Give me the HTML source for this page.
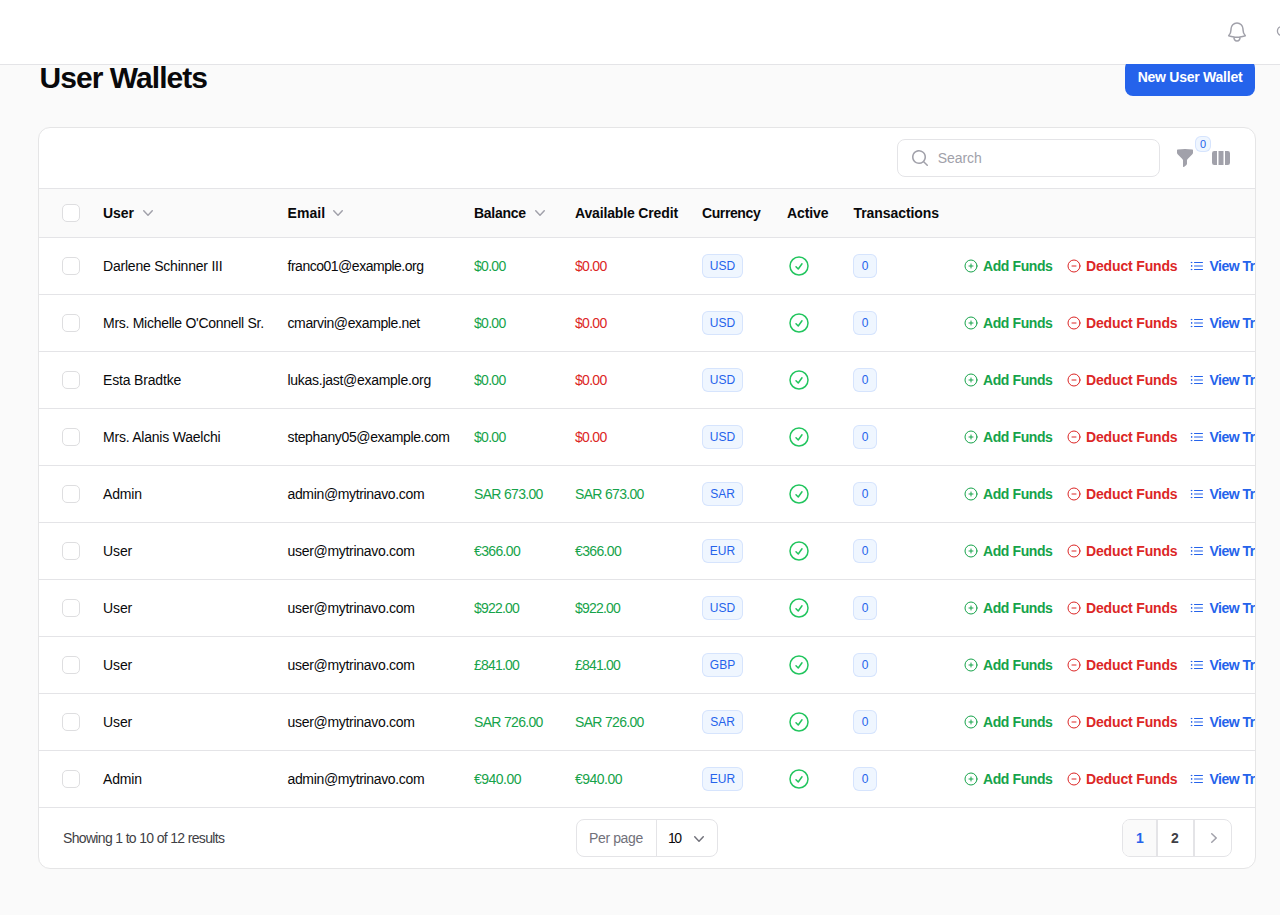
<!DOCTYPE html><html><head><meta charset="utf-8"><title>User Wallets</title><style>
*{box-sizing:border-box;margin:0;padding:0}
html,body{width:1280px;height:915px;overflow:hidden}
body{background:#fafafa;font-family:"Liberation Sans",sans-serif;color:#09090b;position:relative;font-size:14px;line-height:20px}
.ab{position:absolute;display:block}
.t{position:absolute;white-space:nowrap;line-height:20px;font-size:14px}
.top{position:absolute;left:0;top:0;width:1280px;height:64px;background:#fff;z-index:5}
.topline{position:absolute;left:0;top:64px;width:1280px;height:1px;background:#e4e4e7;z-index:0}
.title{position:absolute;left:39.5px;top:59.5px;font-size:30px;line-height:36px;font-weight:700;letter-spacing:-0.95px;white-space:nowrap;color:#09090b}
.btn{position:absolute;left:1125px;top:60px;width:130px;height:36px;border-radius:8px;background:#2563eb;color:#fff;font-weight:700;font-size:14px;line-height:35px;text-align:center;letter-spacing:-0.25px;z-index:1}
.card{position:absolute;left:38px;top:127px;width:1218px;height:742px;background:#fff;border:1px solid #e5e5e6;border-radius:12px;overflow:hidden}
.hl{position:absolute;left:0;width:1216px;height:1px;background:#e4e4e7}
.hdr{position:absolute;left:0;top:61px;width:1216px;height:48px;background:#fafafa}
.cb{position:absolute;width:18px;height:18px;border:1px solid #dedee0;border-radius:5px;background:#fff}
.th{font-weight:700;color:#09090b}
.badge{position:absolute;height:24px;border-radius:6px;background:#eff6ff;box-shadow:inset 0 0 0 1px rgba(37,99,235,.12);color:#2563eb;font-size:12px;line-height:24px;text-align:center}
.act{font-weight:700}
.g{color:#16a34a}.r{color:#dc2626}.b{color:#2563eb}
</style></head><body>
<div class="top">
<svg class="ab" style="left:1225px;top:20px" width="24" height="24" viewBox="0 0 24 24" fill="none" stroke="#a1a1aa" stroke-width="1.5" stroke-linecap="round" stroke-linejoin="round"><path d="M14.857 17.082a23.848 23.848 0 005.454-1.31A8.967 8.967 0 0118 9.75v-.7V9A6 6 0 006 9v.75a8.967 8.967 0 01-2.312 6.022c1.733.64 3.56 1.085 5.455 1.31m5.714 0a24.255 24.255 0 01-5.714 0m5.714 0a3 3 0 11-5.714 0"/></svg>
<svg class="ab" style="left:1270px;top:20px" width="24" height="24" viewBox="0 0 24 24" fill="none" stroke="#a1a1aa" stroke-width="1.3"><circle cx="12" cy="11" r="4.6"/></svg>
</div>
<div class="topline"></div>
<div class="title">User Wallets</div>
<div class="btn">New User Wallet</div>
<div class="card">
<div class="ab" style="left:858px;top:11px;width:263px;height:38px;border:1px solid #e4e4e7;border-radius:8px;background:#fff"></div>
<svg class="ab" style="left:871px;top:20px" width="20" height="20" viewBox="0 0 20 20" fill="#a1a1aa"><path fill-rule="evenodd" d="M9 3.5a5.5 5.5 0 100 11 5.5 5.5 0 000-11zM2 9a7 7 0 1112.452 4.391l3.328 3.329a.75.75 0 11-1.06 1.06l-3.329-3.328A7 7 0 012 9z"/></svg>
<div class="t" style="left:898.7px;top:20px;color:#a1a1aa;letter-spacing:-0.04px">Search</div>
<svg class="ab" style="left:1136px;top:20px" width="20" height="20" viewBox="0 0 20 20" fill="#a1a1aa"><path fill-rule="evenodd" d="M2.628 1.601C5.028 1.206 7.49 1 10 1s4.973.206 7.372.601a.75.75 0 01.628.74v2.288a2.25 2.25 0 01-.659 1.59l-4.682 4.683a2.25 2.25 0 00-.659 1.59v3.037c0 .684-.31 1.33-.844 1.757l-1.937 1.55A.75.75 0 018 18.25v-5.757a2.25 2.25 0 00-.659-1.591L2.659 6.22A2.25 2.25 0 012 4.629V2.34a.75.75 0 01.628-.74z"/></svg>
<div class="badge" style="left:1156px;top:8px;width:16px;height:16px;line-height:16px;font-size:11px;border-radius:6px">0</div>
<svg class="ab" style="left:1172px;top:20px" width="20" height="20" viewBox="0 0 20 20" fill="#a1a1aa"><path d="M14 17h2.75A2.25 2.25 0 0019 14.75v-9.5A2.25 2.25 0 0016.75 3H14v14zM12.5 3h-5v14h5V3zM3.25 3H6v14H3.25A2.25 2.25 0 011 14.75v-9.5A2.25 2.25 0 013.25 3z"/></svg>
<div class="hl" style="top:60px"></div>
<div class="hdr" style="top:61px"></div>
<div class="hl" style="top:109px"></div>
<div class="cb" style="left:23px;top:76px"></div>
<div class="t th" style="left:64px;top:75px;letter-spacing:-0.1px;">User</div>
<svg class="ab" style="left:99px;top:75px" width="20" height="20" viewBox="0 0 20 20" fill="#a1a1aa"><path fill-rule="evenodd" d="M5.23 7.21a.75.75 0 011.06.02L10 11.168l3.71-3.938a.75.75 0 111.08 1.04l-4.25 4.5a.75.75 0 01-1.08 0l-4.25-4.5a.75.75 0 01.02-1.06z"/></svg>
<div class="t th" style="left:248.5px;top:75px;letter-spacing:0.05px;">Email</div>
<svg class="ab" style="left:289px;top:75px" width="20" height="20" viewBox="0 0 20 20" fill="#a1a1aa"><path fill-rule="evenodd" d="M5.23 7.21a.75.75 0 011.06.02L10 11.168l3.71-3.938a.75.75 0 111.08 1.04l-4.25 4.5a.75.75 0 01-1.08 0l-4.25-4.5a.75.75 0 01.02-1.06z"/></svg>
<div class="t th" style="left:435px;top:75px;letter-spacing:-0.267px;">Balance</div>
<svg class="ab" style="left:491px;top:75px" width="20" height="20" viewBox="0 0 20 20" fill="#a1a1aa"><path fill-rule="evenodd" d="M5.23 7.21a.75.75 0 011.06.02L10 11.168l3.71-3.938a.75.75 0 111.08 1.04l-4.25 4.5a.75.75 0 01-1.08 0l-4.25-4.5a.75.75 0 01.02-1.06z"/></svg>
<div class="t th" style="left:536px;top:75px;letter-spacing:-0.15px;">Available Credit</div>
<div class="t th" style="left:663px;top:75px;letter-spacing:-0.4px;">Currency</div>
<div class="t th" style="left:748px;top:75px;letter-spacing:-0.12px;">Active</div>
<div class="t th" style="left:814.5px;top:75px;letter-spacing:-0.073px;">Transactions</div>
<div class="cb" style="left:23px;top:129px"></div>
<div class="t" style="left:64px;top:128px;letter-spacing:-0.216px;">Darlene Schinner III</div>
<div class="t" style="left:248.5px;top:128px;letter-spacing:-0.484px;">franco01@example.org</div>
<div class="t g" style="left:435px;top:128px;letter-spacing:-0.7px;">$0.00</div>
<div class="t r" style="left:536px;top:128px;letter-spacing:-0.7px;">$0.00</div>
<div class="badge" style="left:663px;top:126px;width:41px">USD</div>
<svg class="ab" style="left:748px;top:126px" width="24" height="24" viewBox="0 0 24 24" fill="none" stroke="#22c55e" stroke-width="1.5" stroke-linecap="round" stroke-linejoin="round"><path d="M9 12.75L11.25 15 15 9.75M21 12a9 9 0 11-18 0 9 9 0 0118 0z"/></svg>
<div class="badge" style="left:814px;top:126px;width:24px">0</div>
<svg class="ab" style="left:924px;top:130px" width="16" height="16" viewBox="0 0 24 24" fill="none" stroke="#16a34a" stroke-width="1.5" stroke-linecap="round" stroke-linejoin="round"><path d="M12 9v6m3-3H9m12 0a9 9 0 11-18 0 9 9 0 0118 0z"/></svg>
<div class="t act g" style="left:944px;top:128px;letter-spacing:-0.4px;">Add Funds</div>
<svg class="ab" style="left:1027px;top:130px" width="16" height="16" viewBox="0 0 24 24" fill="none" stroke="#dc2626" stroke-width="1.5" stroke-linecap="round" stroke-linejoin="round"><path d="M15 12H9m12 0a9 9 0 11-18 0 9 9 0 0118 0z"/></svg>
<div class="t act r" style="left:1047px;top:128px;letter-spacing:-0.155px;">Deduct Funds</div>
<svg class="ab" style="left:1150px;top:130px" width="16" height="16" viewBox="0 0 24 24" fill="none" stroke="#2563eb" stroke-width="1.5" stroke-linecap="round" stroke-linejoin="round"><path d="M8.25 6.75h12M8.25 12h12m-12 5.25h12M3.75 6.75h.007v.008H3.75V6.75zm.375 0a.375.375 0 11-.75 0 .375.375 0 01.75 0zM3.75 12h.007v.008H3.75V12zm.375 0a.375.375 0 11-.75 0 .375.375 0 01.75 0zm-.375 5.25h.007v.008h-.007v-.008zm.375 0a.375.375 0 11-.75 0 .375.375 0 01.75 0z"/></svg>
<div class="t act b" style="left:1170.5px;top:128px;letter-spacing:-0.5px">View Transactions</div>
<div class="hl" style="top:166px"></div>
<div class="cb" style="left:23px;top:186px"></div>
<div class="t" style="left:64px;top:185px;letter-spacing:-0.281px;">Mrs. Michelle O&#39;Connell Sr.</div>
<div class="t" style="left:248.5px;top:185px;letter-spacing:-0.378px;">cmarvin@example.net</div>
<div class="t g" style="left:435px;top:185px;letter-spacing:-0.7px;">$0.00</div>
<div class="t r" style="left:536px;top:185px;letter-spacing:-0.7px;">$0.00</div>
<div class="badge" style="left:663px;top:183px;width:41px">USD</div>
<svg class="ab" style="left:748px;top:183px" width="24" height="24" viewBox="0 0 24 24" fill="none" stroke="#22c55e" stroke-width="1.5" stroke-linecap="round" stroke-linejoin="round"><path d="M9 12.75L11.25 15 15 9.75M21 12a9 9 0 11-18 0 9 9 0 0118 0z"/></svg>
<div class="badge" style="left:814px;top:183px;width:24px">0</div>
<svg class="ab" style="left:924px;top:187px" width="16" height="16" viewBox="0 0 24 24" fill="none" stroke="#16a34a" stroke-width="1.5" stroke-linecap="round" stroke-linejoin="round"><path d="M12 9v6m3-3H9m12 0a9 9 0 11-18 0 9 9 0 0118 0z"/></svg>
<div class="t act g" style="left:944px;top:185px;letter-spacing:-0.4px;">Add Funds</div>
<svg class="ab" style="left:1027px;top:187px" width="16" height="16" viewBox="0 0 24 24" fill="none" stroke="#dc2626" stroke-width="1.5" stroke-linecap="round" stroke-linejoin="round"><path d="M15 12H9m12 0a9 9 0 11-18 0 9 9 0 0118 0z"/></svg>
<div class="t act r" style="left:1047px;top:185px;letter-spacing:-0.155px;">Deduct Funds</div>
<svg class="ab" style="left:1150px;top:187px" width="16" height="16" viewBox="0 0 24 24" fill="none" stroke="#2563eb" stroke-width="1.5" stroke-linecap="round" stroke-linejoin="round"><path d="M8.25 6.75h12M8.25 12h12m-12 5.25h12M3.75 6.75h.007v.008H3.75V6.75zm.375 0a.375.375 0 11-.75 0 .375.375 0 01.75 0zM3.75 12h.007v.008H3.75V12zm.375 0a.375.375 0 11-.75 0 .375.375 0 01.75 0zm-.375 5.25h.007v.008h-.007v-.008zm.375 0a.375.375 0 11-.75 0 .375.375 0 01.75 0z"/></svg>
<div class="t act b" style="left:1170.5px;top:185px;letter-spacing:-0.5px">View Transactions</div>
<div class="hl" style="top:223px"></div>
<div class="cb" style="left:23px;top:243px"></div>
<div class="t" style="left:64px;top:242px;letter-spacing:-0.173px;">Esta Bradtke</div>
<div class="t" style="left:248.5px;top:242px;letter-spacing:-0.281px;">lukas.jast@example.org</div>
<div class="t g" style="left:435px;top:242px;letter-spacing:-0.7px;">$0.00</div>
<div class="t r" style="left:536px;top:242px;letter-spacing:-0.7px;">$0.00</div>
<div class="badge" style="left:663px;top:240px;width:41px">USD</div>
<svg class="ab" style="left:748px;top:240px" width="24" height="24" viewBox="0 0 24 24" fill="none" stroke="#22c55e" stroke-width="1.5" stroke-linecap="round" stroke-linejoin="round"><path d="M9 12.75L11.25 15 15 9.75M21 12a9 9 0 11-18 0 9 9 0 0118 0z"/></svg>
<div class="badge" style="left:814px;top:240px;width:24px">0</div>
<svg class="ab" style="left:924px;top:244px" width="16" height="16" viewBox="0 0 24 24" fill="none" stroke="#16a34a" stroke-width="1.5" stroke-linecap="round" stroke-linejoin="round"><path d="M12 9v6m3-3H9m12 0a9 9 0 11-18 0 9 9 0 0118 0z"/></svg>
<div class="t act g" style="left:944px;top:242px;letter-spacing:-0.4px;">Add Funds</div>
<svg class="ab" style="left:1027px;top:244px" width="16" height="16" viewBox="0 0 24 24" fill="none" stroke="#dc2626" stroke-width="1.5" stroke-linecap="round" stroke-linejoin="round"><path d="M15 12H9m12 0a9 9 0 11-18 0 9 9 0 0118 0z"/></svg>
<div class="t act r" style="left:1047px;top:242px;letter-spacing:-0.155px;">Deduct Funds</div>
<svg class="ab" style="left:1150px;top:244px" width="16" height="16" viewBox="0 0 24 24" fill="none" stroke="#2563eb" stroke-width="1.5" stroke-linecap="round" stroke-linejoin="round"><path d="M8.25 6.75h12M8.25 12h12m-12 5.25h12M3.75 6.75h.007v.008H3.75V6.75zm.375 0a.375.375 0 11-.75 0 .375.375 0 01.75 0zM3.75 12h.007v.008H3.75V12zm.375 0a.375.375 0 11-.75 0 .375.375 0 01.75 0zm-.375 5.25h.007v.008h-.007v-.008zm.375 0a.375.375 0 11-.75 0 .375.375 0 01.75 0z"/></svg>
<div class="t act b" style="left:1170.5px;top:242px;letter-spacing:-0.5px">View Transactions</div>
<div class="hl" style="top:280px"></div>
<div class="cb" style="left:23px;top:300px"></div>
<div class="t" style="left:64px;top:299px;letter-spacing:-0.222px;">Mrs. Alanis Waelchi</div>
<div class="t" style="left:248.5px;top:299px;letter-spacing:-0.357px;">stephany05@example.com</div>
<div class="t g" style="left:435px;top:299px;letter-spacing:-0.7px;">$0.00</div>
<div class="t r" style="left:536px;top:299px;letter-spacing:-0.7px;">$0.00</div>
<div class="badge" style="left:663px;top:297px;width:41px">USD</div>
<svg class="ab" style="left:748px;top:297px" width="24" height="24" viewBox="0 0 24 24" fill="none" stroke="#22c55e" stroke-width="1.5" stroke-linecap="round" stroke-linejoin="round"><path d="M9 12.75L11.25 15 15 9.75M21 12a9 9 0 11-18 0 9 9 0 0118 0z"/></svg>
<div class="badge" style="left:814px;top:297px;width:24px">0</div>
<svg class="ab" style="left:924px;top:301px" width="16" height="16" viewBox="0 0 24 24" fill="none" stroke="#16a34a" stroke-width="1.5" stroke-linecap="round" stroke-linejoin="round"><path d="M12 9v6m3-3H9m12 0a9 9 0 11-18 0 9 9 0 0118 0z"/></svg>
<div class="t act g" style="left:944px;top:299px;letter-spacing:-0.4px;">Add Funds</div>
<svg class="ab" style="left:1027px;top:301px" width="16" height="16" viewBox="0 0 24 24" fill="none" stroke="#dc2626" stroke-width="1.5" stroke-linecap="round" stroke-linejoin="round"><path d="M15 12H9m12 0a9 9 0 11-18 0 9 9 0 0118 0z"/></svg>
<div class="t act r" style="left:1047px;top:299px;letter-spacing:-0.155px;">Deduct Funds</div>
<svg class="ab" style="left:1150px;top:301px" width="16" height="16" viewBox="0 0 24 24" fill="none" stroke="#2563eb" stroke-width="1.5" stroke-linecap="round" stroke-linejoin="round"><path d="M8.25 6.75h12M8.25 12h12m-12 5.25h12M3.75 6.75h.007v.008H3.75V6.75zm.375 0a.375.375 0 11-.75 0 .375.375 0 01.75 0zM3.75 12h.007v.008H3.75V12zm.375 0a.375.375 0 11-.75 0 .375.375 0 01.75 0zm-.375 5.25h.007v.008h-.007v-.008zm.375 0a.375.375 0 11-.75 0 .375.375 0 01.75 0z"/></svg>
<div class="t act b" style="left:1170.5px;top:299px;letter-spacing:-0.5px">View Transactions</div>
<div class="hl" style="top:337px"></div>
<div class="cb" style="left:23px;top:357px"></div>
<div class="t" style="left:64px;top:356px;letter-spacing:-0.175px;">Admin</div>
<div class="t" style="left:248.5px;top:356px;letter-spacing:-0.35px;">admin@mytrinavo.com</div>
<div class="t g" style="left:435px;top:356px;letter-spacing:-0.678px;">SAR 673.00</div>
<div class="t g" style="left:536px;top:356px;letter-spacing:-0.678px;">SAR 673.00</div>
<div class="badge" style="left:663px;top:354px;width:41px">SAR</div>
<svg class="ab" style="left:748px;top:354px" width="24" height="24" viewBox="0 0 24 24" fill="none" stroke="#22c55e" stroke-width="1.5" stroke-linecap="round" stroke-linejoin="round"><path d="M9 12.75L11.25 15 15 9.75M21 12a9 9 0 11-18 0 9 9 0 0118 0z"/></svg>
<div class="badge" style="left:814px;top:354px;width:24px">0</div>
<svg class="ab" style="left:924px;top:358px" width="16" height="16" viewBox="0 0 24 24" fill="none" stroke="#16a34a" stroke-width="1.5" stroke-linecap="round" stroke-linejoin="round"><path d="M12 9v6m3-3H9m12 0a9 9 0 11-18 0 9 9 0 0118 0z"/></svg>
<div class="t act g" style="left:944px;top:356px;letter-spacing:-0.4px;">Add Funds</div>
<svg class="ab" style="left:1027px;top:358px" width="16" height="16" viewBox="0 0 24 24" fill="none" stroke="#dc2626" stroke-width="1.5" stroke-linecap="round" stroke-linejoin="round"><path d="M15 12H9m12 0a9 9 0 11-18 0 9 9 0 0118 0z"/></svg>
<div class="t act r" style="left:1047px;top:356px;letter-spacing:-0.155px;">Deduct Funds</div>
<svg class="ab" style="left:1150px;top:358px" width="16" height="16" viewBox="0 0 24 24" fill="none" stroke="#2563eb" stroke-width="1.5" stroke-linecap="round" stroke-linejoin="round"><path d="M8.25 6.75h12M8.25 12h12m-12 5.25h12M3.75 6.75h.007v.008H3.75V6.75zm.375 0a.375.375 0 11-.75 0 .375.375 0 01.75 0zM3.75 12h.007v.008H3.75V12zm.375 0a.375.375 0 11-.75 0 .375.375 0 01.75 0zm-.375 5.25h.007v.008h-.007v-.008zm.375 0a.375.375 0 11-.75 0 .375.375 0 01.75 0z"/></svg>
<div class="t act b" style="left:1170.5px;top:356px;letter-spacing:-0.5px">View Transactions</div>
<div class="hl" style="top:394px"></div>
<div class="cb" style="left:23px;top:414px"></div>
<div class="t" style="left:64px;top:413px;letter-spacing:-0.1px;">User</div>
<div class="t" style="left:248.5px;top:413px;letter-spacing:-0.3px;">user@mytrinavo.com</div>
<div class="t g" style="left:435px;top:413px;letter-spacing:-0.65px;">€366.00</div>
<div class="t g" style="left:536px;top:413px;letter-spacing:-0.65px;">€366.00</div>
<div class="badge" style="left:663px;top:411px;width:41px">EUR</div>
<svg class="ab" style="left:748px;top:411px" width="24" height="24" viewBox="0 0 24 24" fill="none" stroke="#22c55e" stroke-width="1.5" stroke-linecap="round" stroke-linejoin="round"><path d="M9 12.75L11.25 15 15 9.75M21 12a9 9 0 11-18 0 9 9 0 0118 0z"/></svg>
<div class="badge" style="left:814px;top:411px;width:24px">0</div>
<svg class="ab" style="left:924px;top:415px" width="16" height="16" viewBox="0 0 24 24" fill="none" stroke="#16a34a" stroke-width="1.5" stroke-linecap="round" stroke-linejoin="round"><path d="M12 9v6m3-3H9m12 0a9 9 0 11-18 0 9 9 0 0118 0z"/></svg>
<div class="t act g" style="left:944px;top:413px;letter-spacing:-0.4px;">Add Funds</div>
<svg class="ab" style="left:1027px;top:415px" width="16" height="16" viewBox="0 0 24 24" fill="none" stroke="#dc2626" stroke-width="1.5" stroke-linecap="round" stroke-linejoin="round"><path d="M15 12H9m12 0a9 9 0 11-18 0 9 9 0 0118 0z"/></svg>
<div class="t act r" style="left:1047px;top:413px;letter-spacing:-0.155px;">Deduct Funds</div>
<svg class="ab" style="left:1150px;top:415px" width="16" height="16" viewBox="0 0 24 24" fill="none" stroke="#2563eb" stroke-width="1.5" stroke-linecap="round" stroke-linejoin="round"><path d="M8.25 6.75h12M8.25 12h12m-12 5.25h12M3.75 6.75h.007v.008H3.75V6.75zm.375 0a.375.375 0 11-.75 0 .375.375 0 01.75 0zM3.75 12h.007v.008H3.75V12zm.375 0a.375.375 0 11-.75 0 .375.375 0 01.75 0zm-.375 5.25h.007v.008h-.007v-.008zm.375 0a.375.375 0 11-.75 0 .375.375 0 01.75 0z"/></svg>
<div class="t act b" style="left:1170.5px;top:413px;letter-spacing:-0.5px">View Transactions</div>
<div class="hl" style="top:451px"></div>
<div class="cb" style="left:23px;top:471px"></div>
<div class="t" style="left:64px;top:470px;letter-spacing:-0.1px;">User</div>
<div class="t" style="left:248.5px;top:470px;letter-spacing:-0.3px;">user@mytrinavo.com</div>
<div class="t g" style="left:435px;top:470px;letter-spacing:-0.783px;">$922.00</div>
<div class="t g" style="left:536px;top:470px;letter-spacing:-0.783px;">$922.00</div>
<div class="badge" style="left:663px;top:468px;width:41px">USD</div>
<svg class="ab" style="left:748px;top:468px" width="24" height="24" viewBox="0 0 24 24" fill="none" stroke="#22c55e" stroke-width="1.5" stroke-linecap="round" stroke-linejoin="round"><path d="M9 12.75L11.25 15 15 9.75M21 12a9 9 0 11-18 0 9 9 0 0118 0z"/></svg>
<div class="badge" style="left:814px;top:468px;width:24px">0</div>
<svg class="ab" style="left:924px;top:472px" width="16" height="16" viewBox="0 0 24 24" fill="none" stroke="#16a34a" stroke-width="1.5" stroke-linecap="round" stroke-linejoin="round"><path d="M12 9v6m3-3H9m12 0a9 9 0 11-18 0 9 9 0 0118 0z"/></svg>
<div class="t act g" style="left:944px;top:470px;letter-spacing:-0.4px;">Add Funds</div>
<svg class="ab" style="left:1027px;top:472px" width="16" height="16" viewBox="0 0 24 24" fill="none" stroke="#dc2626" stroke-width="1.5" stroke-linecap="round" stroke-linejoin="round"><path d="M15 12H9m12 0a9 9 0 11-18 0 9 9 0 0118 0z"/></svg>
<div class="t act r" style="left:1047px;top:470px;letter-spacing:-0.155px;">Deduct Funds</div>
<svg class="ab" style="left:1150px;top:472px" width="16" height="16" viewBox="0 0 24 24" fill="none" stroke="#2563eb" stroke-width="1.5" stroke-linecap="round" stroke-linejoin="round"><path d="M8.25 6.75h12M8.25 12h12m-12 5.25h12M3.75 6.75h.007v.008H3.75V6.75zm.375 0a.375.375 0 11-.75 0 .375.375 0 01.75 0zM3.75 12h.007v.008H3.75V12zm.375 0a.375.375 0 11-.75 0 .375.375 0 01.75 0zm-.375 5.25h.007v.008h-.007v-.008zm.375 0a.375.375 0 11-.75 0 .375.375 0 01.75 0z"/></svg>
<div class="t act b" style="left:1170.5px;top:470px;letter-spacing:-0.5px">View Transactions</div>
<div class="hl" style="top:508px"></div>
<div class="cb" style="left:23px;top:528px"></div>
<div class="t" style="left:64px;top:527px;letter-spacing:-0.1px;">User</div>
<div class="t" style="left:248.5px;top:527px;letter-spacing:-0.3px;">user@mytrinavo.com</div>
<div class="t g" style="left:435px;top:527px;letter-spacing:-0.783px;">£841.00</div>
<div class="t g" style="left:536px;top:527px;letter-spacing:-0.783px;">£841.00</div>
<div class="badge" style="left:663px;top:525px;width:41px">GBP</div>
<svg class="ab" style="left:748px;top:525px" width="24" height="24" viewBox="0 0 24 24" fill="none" stroke="#22c55e" stroke-width="1.5" stroke-linecap="round" stroke-linejoin="round"><path d="M9 12.75L11.25 15 15 9.75M21 12a9 9 0 11-18 0 9 9 0 0118 0z"/></svg>
<div class="badge" style="left:814px;top:525px;width:24px">0</div>
<svg class="ab" style="left:924px;top:529px" width="16" height="16" viewBox="0 0 24 24" fill="none" stroke="#16a34a" stroke-width="1.5" stroke-linecap="round" stroke-linejoin="round"><path d="M12 9v6m3-3H9m12 0a9 9 0 11-18 0 9 9 0 0118 0z"/></svg>
<div class="t act g" style="left:944px;top:527px;letter-spacing:-0.4px;">Add Funds</div>
<svg class="ab" style="left:1027px;top:529px" width="16" height="16" viewBox="0 0 24 24" fill="none" stroke="#dc2626" stroke-width="1.5" stroke-linecap="round" stroke-linejoin="round"><path d="M15 12H9m12 0a9 9 0 11-18 0 9 9 0 0118 0z"/></svg>
<div class="t act r" style="left:1047px;top:527px;letter-spacing:-0.155px;">Deduct Funds</div>
<svg class="ab" style="left:1150px;top:529px" width="16" height="16" viewBox="0 0 24 24" fill="none" stroke="#2563eb" stroke-width="1.5" stroke-linecap="round" stroke-linejoin="round"><path d="M8.25 6.75h12M8.25 12h12m-12 5.25h12M3.75 6.75h.007v.008H3.75V6.75zm.375 0a.375.375 0 11-.75 0 .375.375 0 01.75 0zM3.75 12h.007v.008H3.75V12zm.375 0a.375.375 0 11-.75 0 .375.375 0 01.75 0zm-.375 5.25h.007v.008h-.007v-.008zm.375 0a.375.375 0 11-.75 0 .375.375 0 01.75 0z"/></svg>
<div class="t act b" style="left:1170.5px;top:527px;letter-spacing:-0.5px">View Transactions</div>
<div class="hl" style="top:565px"></div>
<div class="cb" style="left:23px;top:585px"></div>
<div class="t" style="left:64px;top:584px;letter-spacing:-0.1px;">User</div>
<div class="t" style="left:248.5px;top:584px;letter-spacing:-0.3px;">user@mytrinavo.com</div>
<div class="t g" style="left:435px;top:584px;letter-spacing:-0.678px;">SAR 726.00</div>
<div class="t g" style="left:536px;top:584px;letter-spacing:-0.678px;">SAR 726.00</div>
<div class="badge" style="left:663px;top:582px;width:41px">SAR</div>
<svg class="ab" style="left:748px;top:582px" width="24" height="24" viewBox="0 0 24 24" fill="none" stroke="#22c55e" stroke-width="1.5" stroke-linecap="round" stroke-linejoin="round"><path d="M9 12.75L11.25 15 15 9.75M21 12a9 9 0 11-18 0 9 9 0 0118 0z"/></svg>
<div class="badge" style="left:814px;top:582px;width:24px">0</div>
<svg class="ab" style="left:924px;top:586px" width="16" height="16" viewBox="0 0 24 24" fill="none" stroke="#16a34a" stroke-width="1.5" stroke-linecap="round" stroke-linejoin="round"><path d="M12 9v6m3-3H9m12 0a9 9 0 11-18 0 9 9 0 0118 0z"/></svg>
<div class="t act g" style="left:944px;top:584px;letter-spacing:-0.4px;">Add Funds</div>
<svg class="ab" style="left:1027px;top:586px" width="16" height="16" viewBox="0 0 24 24" fill="none" stroke="#dc2626" stroke-width="1.5" stroke-linecap="round" stroke-linejoin="round"><path d="M15 12H9m12 0a9 9 0 11-18 0 9 9 0 0118 0z"/></svg>
<div class="t act r" style="left:1047px;top:584px;letter-spacing:-0.155px;">Deduct Funds</div>
<svg class="ab" style="left:1150px;top:586px" width="16" height="16" viewBox="0 0 24 24" fill="none" stroke="#2563eb" stroke-width="1.5" stroke-linecap="round" stroke-linejoin="round"><path d="M8.25 6.75h12M8.25 12h12m-12 5.25h12M3.75 6.75h.007v.008H3.75V6.75zm.375 0a.375.375 0 11-.75 0 .375.375 0 01.75 0zM3.75 12h.007v.008H3.75V12zm.375 0a.375.375 0 11-.75 0 .375.375 0 01.75 0zm-.375 5.25h.007v.008h-.007v-.008zm.375 0a.375.375 0 11-.75 0 .375.375 0 01.75 0z"/></svg>
<div class="t act b" style="left:1170.5px;top:584px;letter-spacing:-0.5px">View Transactions</div>
<div class="hl" style="top:622px"></div>
<div class="cb" style="left:23px;top:642px"></div>
<div class="t" style="left:64px;top:641px;letter-spacing:-0.175px;">Admin</div>
<div class="t" style="left:248.5px;top:641px;letter-spacing:-0.35px;">admin@mytrinavo.com</div>
<div class="t g" style="left:435px;top:641px;letter-spacing:-0.517px;">€940.00</div>
<div class="t g" style="left:536px;top:641px;letter-spacing:-0.517px;">€940.00</div>
<div class="badge" style="left:663px;top:639px;width:41px">EUR</div>
<svg class="ab" style="left:748px;top:639px" width="24" height="24" viewBox="0 0 24 24" fill="none" stroke="#22c55e" stroke-width="1.5" stroke-linecap="round" stroke-linejoin="round"><path d="M9 12.75L11.25 15 15 9.75M21 12a9 9 0 11-18 0 9 9 0 0118 0z"/></svg>
<div class="badge" style="left:814px;top:639px;width:24px">0</div>
<svg class="ab" style="left:924px;top:643px" width="16" height="16" viewBox="0 0 24 24" fill="none" stroke="#16a34a" stroke-width="1.5" stroke-linecap="round" stroke-linejoin="round"><path d="M12 9v6m3-3H9m12 0a9 9 0 11-18 0 9 9 0 0118 0z"/></svg>
<div class="t act g" style="left:944px;top:641px;letter-spacing:-0.4px;">Add Funds</div>
<svg class="ab" style="left:1027px;top:643px" width="16" height="16" viewBox="0 0 24 24" fill="none" stroke="#dc2626" stroke-width="1.5" stroke-linecap="round" stroke-linejoin="round"><path d="M15 12H9m12 0a9 9 0 11-18 0 9 9 0 0118 0z"/></svg>
<div class="t act r" style="left:1047px;top:641px;letter-spacing:-0.155px;">Deduct Funds</div>
<svg class="ab" style="left:1150px;top:643px" width="16" height="16" viewBox="0 0 24 24" fill="none" stroke="#2563eb" stroke-width="1.5" stroke-linecap="round" stroke-linejoin="round"><path d="M8.25 6.75h12M8.25 12h12m-12 5.25h12M3.75 6.75h.007v.008H3.75V6.75zm.375 0a.375.375 0 11-.75 0 .375.375 0 01.75 0zM3.75 12h.007v.008H3.75V12zm.375 0a.375.375 0 11-.75 0 .375.375 0 01.75 0zm-.375 5.25h.007v.008h-.007v-.008zm.375 0a.375.375 0 11-.75 0 .375.375 0 01.75 0z"/></svg>
<div class="t act b" style="left:1170.5px;top:641px;letter-spacing:-0.5px">View Transactions</div>
<div class="hl" style="top:679px"></div>
<div class="t" style="left:24px;top:700px;color:#3f3f46;letter-spacing:-0.664px;">Showing 1 to 10 of 12 results</div>
<div class="ab" style="left:537px;top:691px;width:142px;height:38px;border:1px solid #e4e4e7;border-radius:8px"></div>
<div class="ab" style="left:617px;top:692px;width:1px;height:36px;background:#e4e4e7"></div>
<div class="t" style="left:550px;top:700px;color:#71717a;letter-spacing:-0.371px;">Per page</div>
<div class="t" style="left:629px;top:700px;color:#09090b;letter-spacing:-1.5px">10</div>
<svg class="ab" style="left:650px;top:701px" width="20" height="20" viewBox="0 0 20 20" fill="#71717a"><path fill-rule="evenodd" d="M5.23 7.21a.75.75 0 011.06.02L10 11.168l3.71-3.938a.75.75 0 111.08 1.04l-4.25 4.5a.75.75 0 01-1.08 0l-4.25-4.5a.75.75 0 01.02-1.06z"/></svg>
<div class="ab" style="left:1083px;top:691px;width:110px;height:38px;border:1px solid #e4e4e7;border-radius:8px;overflow:hidden"><div class="ab" style="left:0;top:0;width:34px;height:36px;background:#fafafa"></div><div class="ab" style="left:33px;top:0;width:2px;height:36px;background:#e4e4e7"></div><div class="ab" style="left:70px;top:0;width:2px;height:36px;background:#e4e4e7"></div></div>
<div class="t" style="left:1097px;top:700px;color:#2563eb;font-weight:700">1</div>
<div class="t" style="left:1132px;top:700px;color:#3f3f46;font-weight:700">2</div>
<svg class="ab" style="left:1165px;top:700px" width="20" height="20" viewBox="0 0 20 20" fill="#a1a1aa"><path fill-rule="evenodd" d="M7.21 14.77a.75.75 0 01.02-1.06L11.168 10 7.23 6.29a.75.75 0 111.04-1.08l4.5 4.25a.75.75 0 010 1.08l-4.5 4.25a.75.75 0 01-1.06-.02z"/></svg>
</div>
</body></html>
